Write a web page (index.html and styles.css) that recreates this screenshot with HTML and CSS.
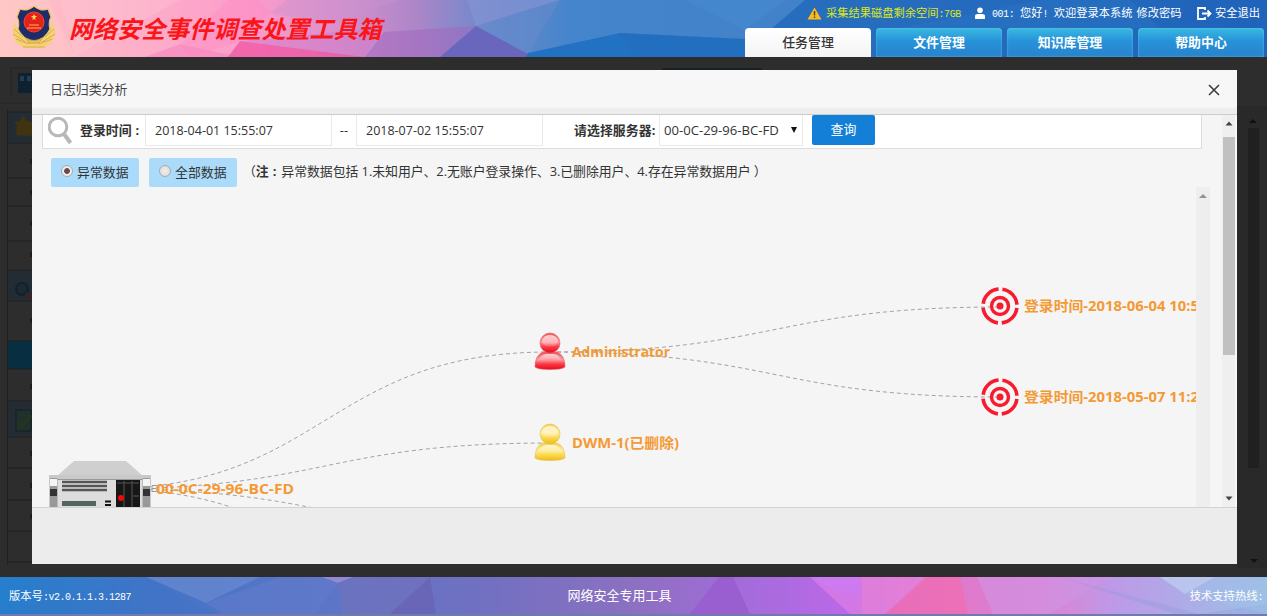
FILE: index.html
```html
<!DOCTYPE html>
<html lang="zh-CN">
<head>
<meta charset="utf-8">
<title>网络安全事件调查处置工具箱</title>
<link rel="stylesheet" href="styles.css">
</head>
<body>
<header class="header">
  <svg class="backdrop" viewBox="0 0 1267 57" preserveAspectRatio="none" aria-hidden="true">
    <defs><linearGradient id="hg"><stop offset="0" stop-color="#ffc3c4"/><stop offset=".09" stop-color="#fdb3c8"/><stop offset=".2" stop-color="#fc9ccb"/><stop offset=".27" stop-color="#d790cc"/><stop offset=".33" stop-color="#ab86c8"/><stop offset=".38" stop-color="#7189cb"/><stop offset=".45" stop-color="#4585cb"/><stop offset=".7" stop-color="#3f80c8"/><stop offset="1" stop-color="#2867bd"/></linearGradient></defs>
    <rect width="1267" height="57" fill="url(#hg)"/>
    <path d="M0 0H48L75 57H0Z" fill="#ffd7cb" opacity=".25"/>
    <path d="M75 57 180 0H60Z" fill="#ffd0dd" opacity=".25"/>
    <path d="M145 57 180 44 240 57Z" fill="#f573b6" opacity=".4"/>
    <path d="M180 44 228 0H260L270 13 238 42 190 57Z" fill="#ff87c3" opacity=".35"/>
    <path d="M228 57 240 41 365 57Z" fill="#ee509e" opacity=".7"/>
    <path d="M240 41 380 28 365 57Z" fill="#d17dc9" opacity=".6"/>
    <path d="M287 0 270 13 330 24 400 0Z" fill="#c693d0" opacity=".4"/>
    <path d="M365 57 384 32 476 26 440 57Z" fill="#a268be" opacity=".55"/>
    <path d="M440 57 476 26 528 54 526 57Z" fill="#6a65bd"/>
    <path d="M467 0 476 26 560 0Z" fill="#8593d1" opacity=".7"/>
    <path d="M476 26 528 54 560 0Z" fill="#648bcc" opacity=".6"/>
    <path d="M526 57 528 53 620 33 745 39V57Z" fill="#2272c3"/>
    <path d="M618 33 635 57H745V39Z" fill="#236abb" opacity=".3"/>
    <path d="M685 0 745 30 785 0Z" fill="#488bcf" opacity=".6"/>
    <path d="M770 30 805 0H1267V57H745Z" fill="#1a63b9" opacity=".65"/>
    <path d="M900 28 1040 0H1130L1160 28Z" fill="#2e79c7" opacity=".3"/>
  </svg>
  <div class="brand">
    <svg class="emblem" width="46" height="44" viewBox="0 0 46 44" role="img" aria-label="警徽">
      <path d="M3 18Q-2 40 17 43H29Q48 40 43 18L37 25 30 36H16L9 25Z" fill="#f3d374"/>
      <path d="m3 24 9 8m-10-3 13 8m-10-3 13 5m25-15-9 8m10-3-13 8m10-3-13 5M12 42h22" stroke="#d9ab50" stroke-width="1" fill="none"/>
      <path d="M23 1q7 6 14 3 2 5 3 8-3 5-1 12-4 9-16 14Q11 33 7 24q2-7-1-12l3-8q7 3 14-3Z" fill="#1e2c68" stroke="#e9c55c" stroke-width="1.2"/>
      <circle cx="23" cy="17" r="10" fill="#e5211e" stroke="#f04a2a"/>
      <path d="m23 9 1 2h2l-2 2 1 2-2-1-2 1 1-2-2-2h2Z" fill="#ffd34d"/><path d="M18 20h10M16 23h14" stroke="#ffb34d"/>
      <path d="M15 33q8 5 16 0l-3 5H18Z" fill="#ecc558" stroke="#cfa14a"/>
    </svg>
    <h1 class="brand-name">网络安全事件调查处置工具箱</h1>
  </div>
  <div class="header-side">
    <div class="status">
      <span class="disk"><svg width="15" height="13" viewBox="0 0 15 13"><path d="M7.5.5 14.5 12.5H.5Z" fill="#fcba1d"/><path d="M7.5 4v4.5M7.5 9.5v1.5" stroke="#594623" stroke-width="1.5"/></svg><span>采集结果磁盘剩余空间<b class="mono">:7GB</b></span></span>
      <span class="user"><svg width="10" height="12" viewBox="0 0 10 12"><circle cx="5" cy="3.2" r="2.8" fill="#fff"/><path d="M0 12V9q0-2 3-2h4q3 0 3 2v3Z" fill="#fff"/></svg><span><b class="mono">001: </b>您好<b class="mono">! </b>欢迎登录本系统</span></span>
      <span class="password">修改密码</span>
      <span class="logout"><svg width="15" height="13" viewBox="0 0 15 13" fill="none" stroke="#fff" stroke-width="1.8"><path d="M8 3V1H1v11h7v-2M5 6.5h8M10.5 3.500l3 3-3 3"/></svg><span>安全退出</span></span>
    </div>
    <nav class="tabs"><a class="tab active">任务管理</a><a class="tab">文件管理</a><a class="tab">知识库管理</a><a class="tab">帮助中心</a></nav>
  </div>
</header>
<main class="stage">
  <svg class="dim" viewBox="0 0 1267 520" aria-hidden="true">
    <rect width="1267" height="520" fill="#2d2d2d"/>
    <path d="M11 39V11H32M0 46H32M1237 50H1267" stroke="#252525" fill="none"/>
    <rect x="18" y="16" width="16" height="20" fill="#0d2130"/><path d="M20 19h4v5h-4zm7 0h4v5h-4z" fill="#273d4b"/>
    <path d="M7 55h25v30H7zM7 213h25v31H7zM7 345h25v34H7z" fill="#242c33"/>
    <path d="M7 284h25v28H7z" fill="#082e41"/>
    <path d="M7.500 52V508M7 55H32M7 86H32M7 121H32M7 149H32M7 184H32M7 213H32M7 244H32M7 284H32M7 312H32M7 344H32M7 380H32M7 411H32M7 443H32M7 474H32M7 505H32" stroke="#202020" fill="none"/>
    <path d="m16 78 1-9-3-4 6-1 3-6 3 6 6 1v14Z" fill="#40330f"/>
    <circle cx="22" cy="232" r="6" fill="#1a2935" stroke="#13202c" stroke-width="2"/><path d="m26 236 5 5" stroke="#491c21" stroke-width="3"/>
    <path d="M16 353h15v21H16z" fill="#20302d" stroke="#151d23"/><path d="m18 365 4 4 9-11" stroke="#23371b" stroke-width="3" fill="none"/>
    <path d="M31 102v5M31 133v5M31 164v5M31 195v5M31 261v5M31 327v5M31 394v5M31 426v5M31 457v5" stroke="#1c1c1c" stroke-width="2"/>
    <path d="M662 12H762" stroke="#162027" stroke-width="2"/>
    <rect x="1237" y="51" width="30" height="460" fill="#292929"/><rect x="1248" y="71" width="11" height="340" fill="#202020"/>
    <path d="m1249 66 4-4 4 4Zm1 436h8l-4 4Z" fill="#111"/>
  </svg>
  <section class="dialog">
    <div class="dialog-title"><h2>日志归类分析</h2><svg width="12" height="12" viewBox="0 0 12 12"><path d="m1 1 10 10M11 1 1 11" stroke="#38383c" stroke-width="1.5"/></svg></div>
    <div class="dialog-body">
      <div class="content">
        <form class="search">
          <svg class="glass" width="25" height="28" viewBox="0 0 25 28" fill="none" stroke="#b8b8b8"><circle cx="10" cy="11" r="8.800" stroke-width="3"/><path d="m16 18 6.500 9" stroke-width="4"/></svg>
          <strong class="time-label">登录时间<span class="colon">:</span></strong><span class="field">2018-04-01 15:55:07</span><span class="dash">--</span><span class="field">2018-07-02 15:55:07</span>
          <strong class="server-label">请选择服务器:</strong><span class="select"><span>00-0C-29-96-BC-FD</span><svg width="6" height="6" viewBox="0 0 7 7"><path d="M0 0h7L3.500 7Z" fill="#111"/></svg></span>
          <button class="query" type="button">查询</button>
        </form>
        <div class="filters"><label class="choice"><i class="radio on"></i>异常数据</label><label class="choice"><i class="radio"></i>全部数据</label><span class="note">（<strong>注<span class="note-colon">:</span></strong>异常数据包括 1.未知用户、2.无账户登录操作、3.已删除用户、4.存在异常数据用户 ）</span></div>
        <div class="canvas">
          <svg class="graph" width="1154" height="320" viewBox="42 187 1154 320">
            <defs>
              <linearGradient id="red" x2="0" y2="1"><stop stop-color="#f4535d"/><stop offset=".45" stop-color="#ff979b"/><stop offset=".7" stop-color="#f83745"/><stop offset="1" stop-color="#e90b1a"/></linearGradient>
              <linearGradient id="yellow" x2="0" y2="1"><stop stop-color="#f6d04a"/><stop offset=".45" stop-color="#ffed9d"/><stop offset=".7" stop-color="#fad74b"/><stop offset="1" stop-color="#f0bb18"/></linearGradient>
              <linearGradient id="shine" x2="0" y2="1"><stop stop-color="#fff" stop-opacity=".75"/><stop offset="1" stop-color="#fff" stop-opacity=".05"/></linearGradient>
              <g id="person"><path d="M-15 15Q-15 3-7 0H7Q15 3 15 15 12 17.500 0 17.500T-15 15Z"/><circle cy="-9" r="10"/><ellipse cy="-11" rx="8" ry="6" fill="url(#shine)" stroke="none"/><path d="M-12 9Q-9 2-3 2H3Q9 2 12 9 0 5-12 9Z" fill="url(#shine)" stroke="none"/></g>
              <g id="target"><circle r="17" fill="none" stroke="#f81a2d" stroke-width="3.600" stroke-dasharray="22.7 4" stroke-dashoffset="-2"/><circle r="8.500" fill="none" stroke="#f81a2d" stroke-width="3.400"/><circle r="3.500" fill="#f81a2d"/></g>
            </defs>
            <g class="links"><path d="M100 489C325 489 325 352 550 352"/><path d="M100 489C325 489 325 443 550 443"/><path d="M107 489C331 489 331 534 557 534"/><path d="M107 489C331 489 331 625 557 625"/><path d="M550 352C775 352 775 307 1000 307"/><path d="M550 352C775 352 775 397 1000 397"/></g>
            <g>
              <path d="M57 476 74 461H126L143 476Z" fill="#cfcfcf"/><path d="M49 475H151V510H49Z" fill="#c9c9c9"/><path d="M57 479.500H143V510H57Z" fill="#ddd" stroke="#999"/>
              <path d="M62 482h45M62 486h45M62 490h45" stroke="#555" stroke-width="2.600"/><path d="M62 501h34v5H62z" fill="#536761"/><path d="M105 501.500h6M105 505h6" stroke="#111" stroke-width="2"/>
              <path d="M116 480h24v28h-24z" fill="#171717"/><path d="M117 483h22M124 481v27M132 481v27M133 496h6" stroke="#555"/><circle cx="121" cy="498" r="3" fill="#f20a0a"/>
              <path d="M50 478h7v30h-7zm93 0h7v30h-7z" fill="#999"/><path d="M50 479h7v7h-7zm93 0h7v7h-7z" fill="#f5f5f5"/><path d="M50 489h7v7h-7zm93 0h7v7h-7z" fill="#333"/>
              <path d="M152 485.500h4M152 488.500h4M152 491.500h4" stroke="#999"/>
            </g>
            <use href="#person" x="550" y="352" fill="url(#red)" stroke="#df5960" stroke-width=".6"/>
            <use href="#person" x="550" y="443" fill="url(#yellow)" stroke="#dfbd50" stroke-width=".6"/>
            <use href="#target" x="1000" y="306"/><use href="#target" x="1000" y="397"/>
            <g class="labels">
              <text x="156" y="494" textLength="138" lengthAdjust="spacingAndGlyphs">00-0C-29-96-BC-FD</text><text x="572" y="357" textLength="98" lengthAdjust="spacingAndGlyphs">Administrator</text><text x="572" y="448" textLength="107" lengthAdjust="spacingAndGlyphs">DWM-1(已删除)</text>
              <text x="1024" y="311" textLength="175" lengthAdjust="spacingAndGlyphs">登录时间-2018-06-04 10:5</text><text x="1024" y="402" textLength="175" lengthAdjust="spacingAndGlyphs">登录时间-2018-05-07 11:2</text>
            </g>
          </svg>
          <div class="inner-scroll"><svg width="8" height="5" viewBox="0 0 8 5"><path d="m0 5 4-4 4 4Z" fill="#929292"/></svg></div>
        </div>
      </div>
      <div class="scroll"><svg width="8" height="5" viewBox="0 0 8 5"><path d="m.5 4.500 3.500-4 3.500 4Z" fill="#444"/></svg><div class="thumb"></div><svg width="8" height="5" viewBox="0 0 8 5"><path d="M.5.5h7L4 4.500Z" fill="#444"/></svg></div>
    </div>
    <div class="dialog-footer"></div>
  </section>
</main>
<footer class="footer">
  <svg class="backdrop" viewBox="0 0 1267 37" preserveAspectRatio="none" aria-hidden="true">
    <defs><linearGradient id="fg"><stop offset="0" stop-color="#257ecc"/><stop offset=".13" stop-color="#4574c7"/><stop offset=".25" stop-color="#5a76c7"/><stop offset=".38" stop-color="#7170c1"/><stop offset=".5" stop-color="#8c70c1"/><stop offset=".6" stop-color="#a76bdd"/><stop offset=".68" stop-color="#bf68e9"/><stop offset=".75" stop-color="#df78cd"/><stop offset=".82" stop-color="#df80ce"/><stop offset=".88" stop-color="#bd9ae8"/><stop offset="1" stop-color="#9cc0e5"/></linearGradient></defs>
    <rect width="1267" height="37" fill="url(#fg)"/>
    <path d="M146 0H260L206 26Z" fill="#6687d0" opacity=".8"/><path d="M0 37 146 0 215 37Z" fill="#3670c3" opacity=".15"/><path d="M206 26 280 0H320L338 6 315 37H223Z" fill="#6279ca" opacity=".6"/><path d="M322 0H353L338 6Z" fill="#9189d4"/><path d="M338 6 342 37H390L430 0H353Z" fill="#7371bb" opacity=".6"/><path d="M390 37 430 0 436 37Z" fill="#6966b8"/>
    <path d="M690 37 719 0H733L750 37Z" fill="#995ed0"/><path d="M810 0 850 37H885L925 0Z" fill="#e17fe5" opacity=".65"/><path d="M810 0H858L860 17 840 16Z" fill="#ca7cf7" opacity=".65"/><path d="M862 0H930L885 37H862Z" fill="#e783cf" opacity=".5"/><path d="M885 37 926 0H960L968 37Z" fill="#f06eaf" opacity=".75"/><path d="M977 0 993 37H1050L1110 0Z" fill="#cf94e6" opacity=".6"/><path d="M1060 0 1175 37H1267V27L1200 37 1060 0Z" fill="#8f9bdc" opacity=".35"/><path d="M1160 0H1215L1185 17Z" fill="#bac5ee"/><path d="m1215 0-30 17 82 20V0Z" fill="#9fc2e8" opacity=".45"/>
  </svg>
  <span class="version">版本号<b class="mono">:v2.0.1.1.3.1287</b></span><span class="product">网络安全专用工具</span><span class="hotline">技术支持热线<b class="mono">:</b></span>
</footer>
<div class="bottom-edge"></div>
</body>
</html>
```
FILE: styles.css
```css
* { box-sizing: border-box; }
body { margin: 0; width: 1267px; height: 616px; overflow: hidden; display: flex; flex-direction: column; font-family: "Open Sans", "Noto Sans CJK SC", sans-serif; font-size: 12.900px; color: #333; background: #2d2d2d; }
h1, h2 { margin: 0; }
svg { display: block; flex: none; }
.header { position: relative; height: 57px; flex: none; display: flex; justify-content: space-between; }
.backdrop { position: absolute; inset: 0; width: 100%; height: 100%; z-index: -1; }
.header, .footer { isolation: isolate; }
.brand { display: flex; padding: 5px 0 0 11px; gap: 12px; }
.brand-name { font-size: 24px; line-height: 30px; padding-top: 9px; font-style: italic; font-weight: 700; color: #fa1518; white-space: nowrap; letter-spacing: .05px; }
.header-side { width: 522px; display: flex; flex-direction: column; padding-right: 3px; }
.status { height: 28px; padding: 2px 4px 4px 62px; display: flex; align-items: center; font-size: 11.250px; color: #fff; white-space: nowrap; line-height: 16px; }
.status > span { display: flex; align-items: center; }
.mono { font: 400 10px "Liberation Mono", monospace; letter-spacing: -.4px; white-space: pre; }
.disk { color: #dce817; gap: 4px; }
.user { margin-left: 14px; gap: 7px; }
.password { margin-left: 4px; }
.logout { margin-left: auto; gap: 3px; }
.tabs { display: grid; grid-template-columns: repeat(4, 126px); gap: 5px; height: 29px; }
.tab { border-radius: 4px 4px 0 0; background: linear-gradient(#3bb9e1, #2693d9 45%, #2882cd); box-shadow: inset 0 0 2px #65cbed; color: #fff; font-weight: 700; line-height: 28px; text-align: center; }
.tab.active { background: linear-gradient(#fff, #f4f4f5); color: #333; font-weight: 500; box-shadow: none; }
.stage { position: relative; height: 520px; flex: none; }
.dim { width: 1267px; height: 520px; }
.dialog { position: absolute; left: 32px; top: 13px; width: 1205px; height: 494px; display: flex; flex-direction: column; background: #f5f5f5; }
.dialog-title { height: 45px; border-bottom: 1px solid #ccc; background: linear-gradient(#f7f7f8 37px, #ededed 39px); display: flex; justify-content: space-between; padding: 14px 17px 0 18px; }
.dialog-title h2 { font-size: 12.900px; font-weight: 400; line-height: 11px; color: #444; }
.dialog-body { height: 392px; display: flex; justify-content: space-between; }
.content { width: 1178px; padding-left: 10px; }
.search { width: 1160px; height: 34px; background: #fff; border: 1px solid #ddd; border-top: 0; display: flex; align-items: flex-start; line-height: 31px; white-space: nowrap; }
.glass { margin: 1px 0 0 5px; }
.time-label { width: 65px; margin-left: 7px; }
.colon { margin-left: 4px; }
.field { width: 187px; height: 31px; padding-left: 9px; border: 1px solid #eaeaea; border-top: 0; font-size: 12.500px; line-height: 32px; }
.dash { width: 24px; text-align: center; }
.server-label { margin-left: 31px; width: 85px; letter-spacing: .05px; }
.select { width: 144px; height: 31px; border: 1px solid #eaeaea; border-top: 0; padding: 0 5px 0 4px; display: flex; justify-content: space-between; align-items: center; font-size: 13.100px; }
.query { width: 63px; height: 30px; margin-left: 9px; padding: 0 0 3px; border: 0; border-radius: 2px; color: #fff; background: #147fd7; font: 12.900px "Noto Sans CJK SC", sans-serif; }
.filters { height: 38px; padding: 9px 0 0 9px; display: flex; gap: 10px; }
.choice { width: 88px; height: 29px; background: #abdbfb; border-radius: 2px; display: flex; align-items: center; gap: 4px; padding: 0 0 2px 10px; white-space: nowrap; }
.radio { width: 12px; height: 12px; border: 1px solid #aaa; border-radius: 50%; background: radial-gradient(circle, #eee, #d8d8d8); margin-top: -1px; }
.radio.on { background: radial-gradient(circle, #654b4b 0 2.500px, #ececec 3.200px); }
.note { font-size: 12.900px; line-height: 27px; white-space: nowrap; margin-left: -4px; letter-spacing: -.06px; }
.note-colon { margin: 0 5px 0 4px; }
.canvas { height: 320px; display: flex; overflow: hidden; }
.graph { overflow: hidden; }
.links { fill: none; stroke: #a3a3a3; stroke-dasharray: 4 3; }
.labels { fill: #f49a35; font-size: 13.800px; font-weight: 700; }
.inner-scroll { width: 14px; background: #eee; padding: 6px 3px; flex: none; }
.scroll { width: 15px; background: #efefef; border-right: 2px solid #f8f8f8; display: flex; flex-direction: column; align-items: center; padding: 6px 0; }
.thumb { width: 12px; height: 218px; background: #c1c1c1; margin: 11px 0 auto; }
.dialog-footer { height: 57px; background: #ececec; border-top: 1px solid #d3d3d3; }
.footer { position: relative; height: 37px; flex: none; padding: 0 4px 2px 9px; display: grid; grid-template-columns: 1fr auto 1fr; align-items: center; color: #fff; font-size: 11.300px; white-space: nowrap; }
.footer .mono { letter-spacing: -.5px; }
.product { font-size: 13px; margin-right: 33px; }
.hotline { text-align: right; }
.bottom-edge { height: 2px; flex: none; background: #707ba9; }
```
